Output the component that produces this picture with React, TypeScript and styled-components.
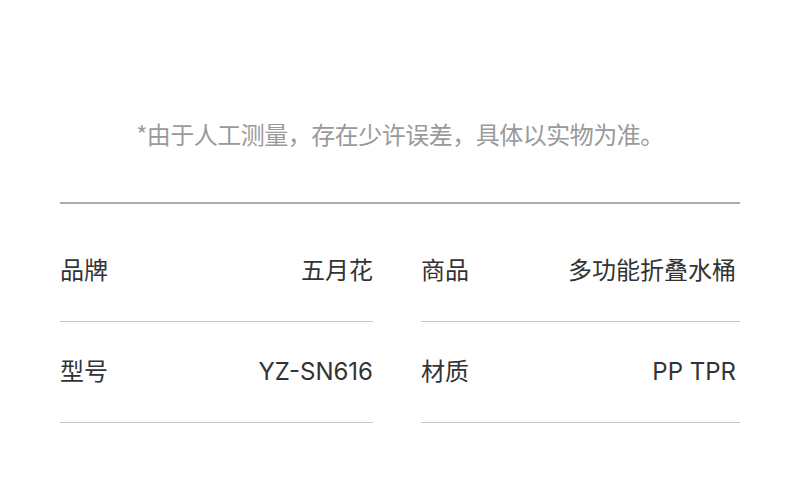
import styled, { createGlobalStyle } from 'styled-components';

const specs = [
  { label: '品牌', value: '五月花' },
  { label: '商品', value: '多功能折叠水桶' },
  { label: '型号', value: 'YZ-SN616' },
  { label: '材质', value: 'PP TPR' },
];

export default function App() {
  return (
    <>
      <GlobalStyle />
      <Page>
        <Note>*由于人工测量，存在少许误差，具体以实物为准。</Note>
        <Divider />
        <SpecGrid>
          {specs.map((s, i) => (
            <SpecRow key={s.label} $right={i % 2 === 1}>
              <SpecLine>
                <Label>{s.label}</Label>
                <Value>{s.value}</Value>
              </SpecLine>
            </SpecRow>
          ))}
        </SpecGrid>
      </Page>
    </>
  );
}

const GlobalStyle = createGlobalStyle`
  body {
    margin: 0;
    background: #fff;
    font-family: "Noto Sans CJK SC", "Noto Sans", sans-serif;
  }
`;

const Page = styled.div`
  width: 790px;
  height: 486px;
  box-sizing: border-box;
  padding: 117px 50px 0 60px;
`;

const Note = styled.p`
  margin: 0;
  font-size: 24px;
  line-height: 34px;
  letter-spacing: -0.5px;
  color: #9a9a9a;
  text-align: center;
`;

const Divider = styled.div`
  height: 2px;
  margin-top: 51px;
  background: #ababab;
`;

const SpecGrid = styled.div`
  display: grid;
  grid-template-columns: 313px 1fr;
  column-gap: 48px;
  margin-top: 17px;
`;

const SpecRow = styled.div<{ $right?: boolean }>`
  display: flex;
  align-items: center;
  height: 101px;
  box-sizing: border-box;
  padding-bottom: 5px;
  border-bottom: 1px solid #c6c6c6;
  padding-right: ${(p) => (p.$right ? '4px' : '0')};
`;

const SpecLine = styled.div`
  flex: 1;
  display: flex;
  align-items: baseline;
  justify-content: space-between;
`;

const Label = styled.span`
  font-size: 24px;
  color: #333;
`;

const Value = styled.span`
  font-family: Inter, "Noto Sans CJK SC", sans-serif;
  font-size: 24px;
  color: #333;
`;
